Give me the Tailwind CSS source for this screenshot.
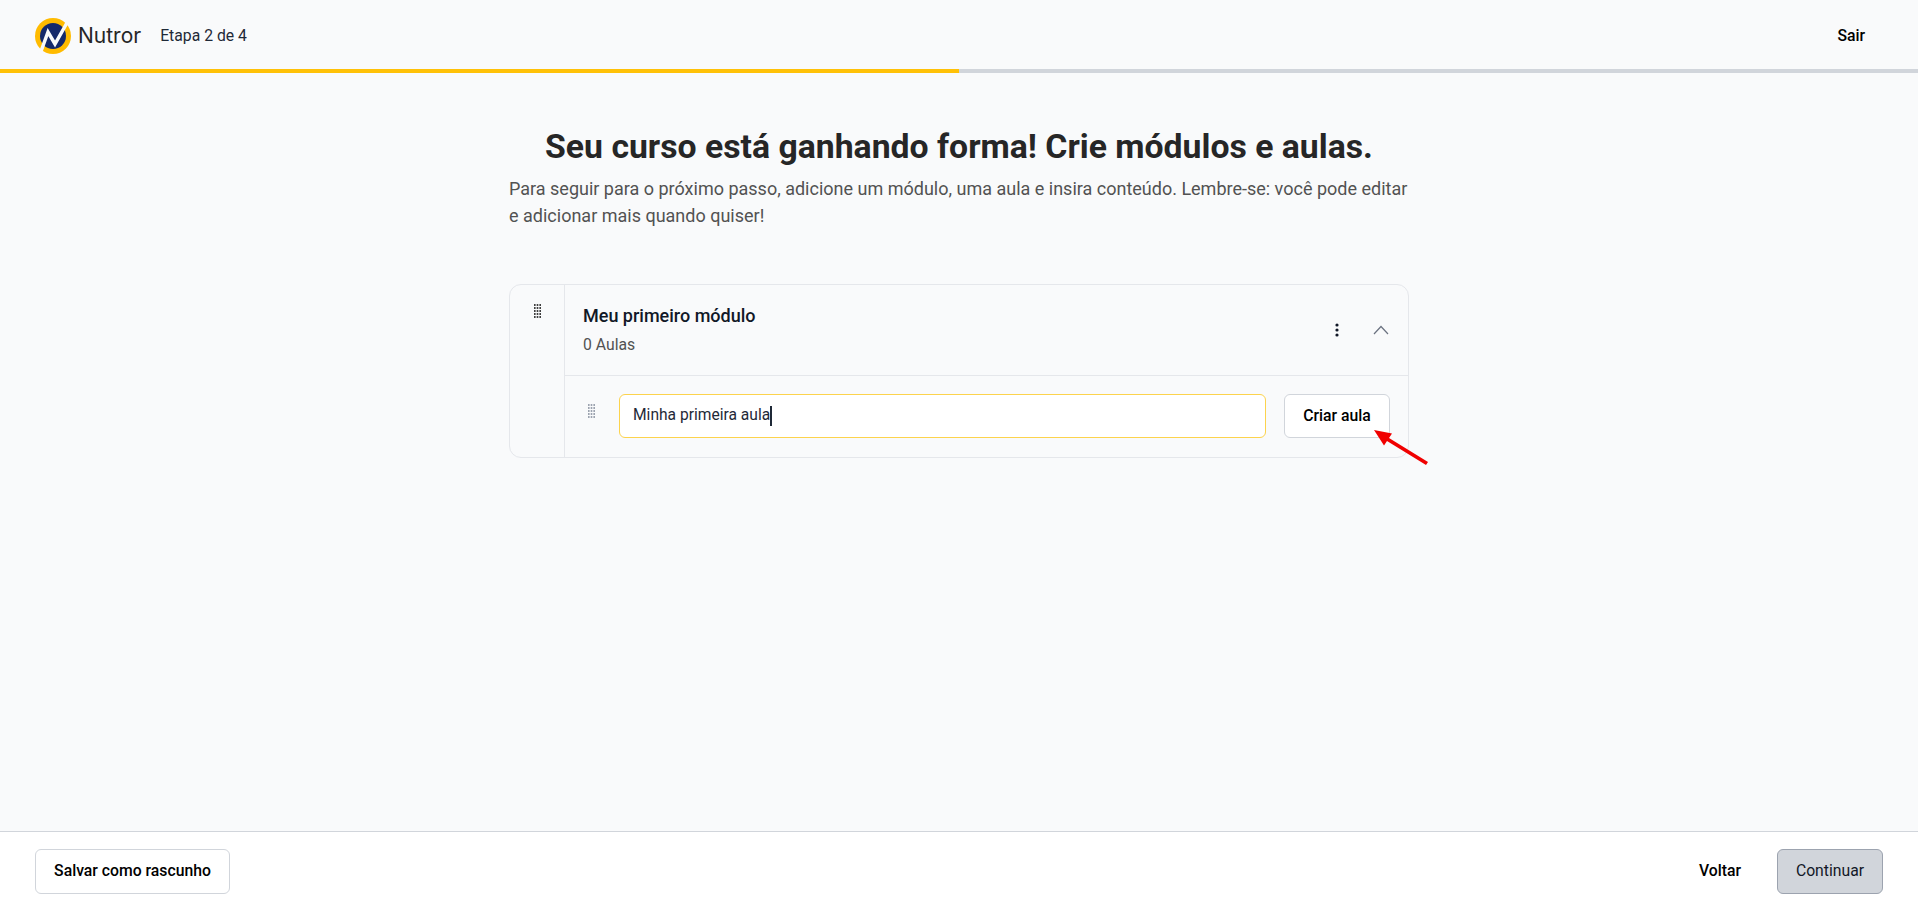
<!DOCTYPE html>
<html lang="pt-BR">
<head>
    <meta charset="UTF-8">
    <meta name="viewport" content="width=device-width, initial-scale=1.0">
    <title>Nutror - Etapa 2 de 4</title>
    <script src="https://cdn.jsdelivr.net/npm/@tailwindcss/browser@4"></script>
</head>
<body class="relative h-[910px] overflow-hidden bg-[#f9fafb] font-['Roboto',sans-serif] text-[#1f2937]">
    <div class="flex h-[910px] flex-col">

        <!-- Topo -->
        <header class="flex h-[69px] items-center justify-between pl-[35px] pr-[53px] pt-[2px]">
            <div class="flex items-center">
                <svg class="h-[36px] w-[36px]" viewBox="0 0 36 36">
                    <circle cx="18" cy="18" r="18" fill="#ffbb00"/>
                    <circle cx="18" cy="18" r="13" fill="#14296b"/>
                    <path d="M5 36 L13 14 L20 26 L33 3" fill="none" stroke="#f9fafb" stroke-width="3.5"/>
                </svg>
                <span class="ml-[7px] font-['Inter',sans-serif] text-[21px] text-[#262626]">Nutror</span>
                <span class="ml-[19px] text-[15.75px] text-[#1f2937]">Etapa 2 de 4</span>
            </div>
            <button class="text-[15.75px] font-medium text-black">Sair</button>
        </header>

        <!-- Progresso -->
        <div class="h-[4px] w-full bg-[#d1d5db]">
            <div class="h-full w-1/2 bg-[#ffc107]"></div>
        </div>

        <!-- Conteudo -->
        <main class="mx-auto flex w-[900px] flex-1 flex-col">
            <h1 class="mt-[52px] text-center text-[33.75px] leading-[44px] font-bold text-[#262626]">Seu curso está ganhando forma! Crie módulos e aulas.</h1>
            <p class="mt-[6px] text-[18px] leading-[27px] text-[#525252]">Para seguir para o próximo passo, adicione um módulo, uma aula e insira conteúdo. Lembre-se: você pode editar e adicionar mais quando quiser!</p>

            <div class="mt-[55px] flex h-[174px] rounded-[12px] border border-[#e5e7eb]">
                <div class="flex w-[55px] shrink-0 justify-center border-r border-[#e5e7eb] pt-[19px]">
                    <svg class="h-[16px] w-[7px] text-[#404040]" viewBox="0 0 7 16" fill="currentColor">
                        <rect x="0" y="0" width="1.6" height="2"/><rect x="2.7" y="0" width="1.6" height="2"/><rect x="5.4" y="0" width="1.6" height="2"/>
                        <rect x="0" y="3" width="1.6" height="2"/><rect x="2.7" y="3" width="1.6" height="2"/><rect x="5.4" y="3" width="1.6" height="2"/>
                        <rect x="0" y="6" width="1.6" height="2"/><rect x="2.7" y="6" width="1.6" height="2"/><rect x="5.4" y="6" width="1.6" height="2"/>
                        <rect x="0" y="9" width="1.6" height="2"/><rect x="2.7" y="9" width="1.6" height="2"/><rect x="5.4" y="9" width="1.6" height="2"/>
                        <rect x="0" y="12" width="1.6" height="2"/><rect x="2.7" y="12" width="1.6" height="2"/><rect x="5.4" y="12" width="1.6" height="2"/>
                    </svg>
                </div>
                <div class="flex flex-1 flex-col">
                    <div class="flex h-[91px] items-center justify-between border-b border-[#e5e7eb] pl-[18px] pr-[19px]">
                        <div class="pb-[2px]">
                            <div class="text-[18px] leading-[28px] font-medium text-[#111827]">Meu primeiro módulo</div>
                            <div class="mt-[3px] text-[15.75px] leading-[24px] text-[#525252]">0 Aulas</div>
                        </div>
                        <div class="flex items-center gap-[34px]">
                            <svg class="h-[16px] w-[4px] text-[#111827]" viewBox="0 0 4 16" fill="currentColor">
                                <circle cx="2" cy="3" r="1.6"/><circle cx="2" cy="8" r="1.6"/><circle cx="2" cy="13" r="1.6"/>
                            </svg>
                            <svg class="h-[10px] w-[16px] text-[#6b7280]" viewBox="0 0 16 10" fill="none" stroke="currentColor" stroke-width="1.2">
                                <path d="M1 9 L8 1.5 L15 9"/>
                            </svg>
                        </div>
                    </div>
                    <div class="flex flex-1 items-start pl-[23px] pr-[18px] pt-[18px]">
                        <svg class="mt-[10px] h-[16px] w-[7px] text-[#9ca3af]" viewBox="0 0 7 16" fill="currentColor">
                            <rect x="0" y="0" width="1.6" height="2"/><rect x="2.7" y="0" width="1.6" height="2"/><rect x="5.4" y="0" width="1.6" height="2"/>
                            <rect x="0" y="3" width="1.6" height="2"/><rect x="2.7" y="3" width="1.6" height="2"/><rect x="5.4" y="3" width="1.6" height="2"/>
                            <rect x="0" y="6" width="1.6" height="2"/><rect x="2.7" y="6" width="1.6" height="2"/><rect x="5.4" y="6" width="1.6" height="2"/>
                            <rect x="0" y="9" width="1.6" height="2"/><rect x="2.7" y="9" width="1.6" height="2"/><rect x="5.4" y="9" width="1.6" height="2"/>
                            <rect x="0" y="12" width="1.6" height="2"/><rect x="2.7" y="12" width="1.6" height="2"/><rect x="5.4" y="12" width="1.6" height="2"/>
                        </svg>
                        <div class="ml-[24px] flex h-[44px] w-[647px] items-center rounded-[6px] border border-[#fcd34d] bg-white pl-[13px] text-[15.6px] text-[#1f2937]">
                            Minha primeira aula<span class="h-[20px] w-[2px] bg-[#1f2937]"></span>
                        </div>
                        <button class="ml-[18px] h-[44px] w-[106px] rounded-[6px] border border-[#d1d5db] bg-white text-[15.75px] font-medium text-black">Criar aula</button>
                    </div>
                </div>
            </div>
        </main>

        <!-- Rodape -->
        <footer class="flex h-[79px] items-center justify-between border-t border-[#d1d5db] bg-white pl-[35px] pr-[35px]">
            <button class="h-[45px] w-[195px] rounded-[6px] border border-[#d1d5db] bg-white text-[15.75px] font-medium text-black">Salvar como rascunho</button>
            <div class="flex items-center gap-[36px]">
                <button class="text-[15.75px] font-medium text-black">Voltar</button>
                <button class="h-[45px] w-[106px] rounded-[6px] border border-[#9ca3af] bg-[#d1d5db] text-[15.75px] text-[#111827]">Continuar</button>
            </div>
        </footer>
    </div>

    <!-- Seta vermelha sobre a captura -->
    <svg class="absolute left-[1370px] top-[425px] h-[40px] w-[60px]" viewBox="0 0 60 40">
        <path d="M4 5 L22 8.5 L19 13 L58 37 L56 40 L17 16 L14 20.5 Z" fill="#f00000"/>
    </svg>
</body>
</html>
